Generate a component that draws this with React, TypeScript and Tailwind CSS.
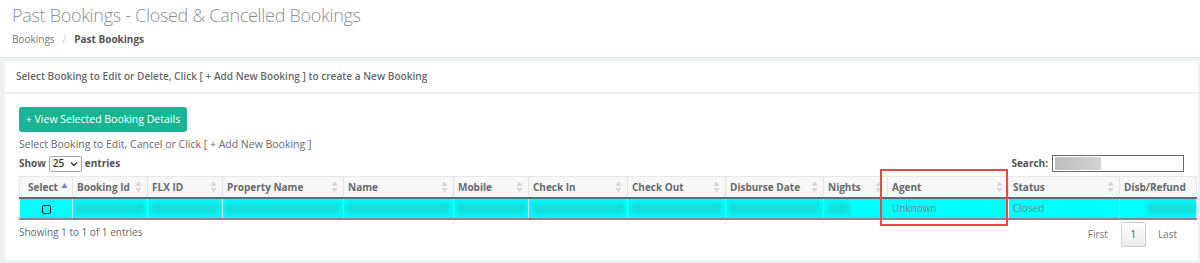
import React from "react";

const COLS = [
  { label: "Select", w: 53 },
  { label: "Booking Id", w: 75 },
  { label: "FLX ID", w: 75 },
  { label: "Property Name", w: 121 },
  { label: "Name", w: 110 },
  { label: "Mobile", w: 75 },
  { label: "Check In", w: 99 },
  { label: "Check Out", w: 98 },
  { label: "Disburse Date", w: 98 },
  { label: "Nights", w: 64 },
  { label: "Agent", w: 121 },
  { label: "Status", w: 111 },
  { label: "Disb/Refund", w: 77 },
];

function SortIcon({ active }: { active?: boolean }) {
  if (active) {
    return (
      <svg width="7" height="10" viewBox="0 0 7 10" className="absolute right-[4px] top-[5px]">
        <path d="M3.5 1 L6.5 6 L0.5 6 Z" fill="#7b7fe0" />
      </svg>
    );
  }
  return (
    <svg width="7" height="12" viewBox="0 0 7 12" className="absolute right-[5px] top-[4px]">
      <path d="M3.5 0.5 L6.5 5 L0.5 5 Z" fill="#d6d6d6" />
      <path d="M3.5 11.5 L6.5 7 L0.5 7 Z" fill="#d6d6d6" />
    </svg>
  );
}

function Blur({ className }: { className: string }) {
  return <div className={"h-[13px] bg-[#14e0e0] blur-[2px] " + className} />;
}

export default function App() {
  return (
    <div className="relative h-[263px] w-[1200px] overflow-hidden bg-[#eef0f2] font-['Open_Sans',sans-serif] text-[#676a6c]">
      {/* page heading */}
      <div className="h-[58px] border-b border-[#e3e6e9] bg-white px-[12px] pt-[3px]">
        <h1 className="text-[18px] font-light leading-[24px] tracking-[-0.3px] text-[#8d8f91]">
          Past Bookings - Closed &amp; Cancelled Bookings
        </h1>
        <div className="mt-[5px] flex items-center text-[10px] leading-[14px]">
          <span className="text-[#777]">Bookings</span>
          <span className="mx-[8px] text-[#ccc]">/</span>
          <span className="font-bold text-[#555]">Past Bookings</span>
        </div>
      </div>

      {/* panel */}
      <div className="ml-[5px] mr-[2px] mt-[3px] h-[199px] bg-white">
        <div className="flex h-[33px] items-center border-b-2 border-[#eef0f2] px-[11px] text-[10.1px] font-semibold text-[#676a6c]">
          Select Booking to Edit or Delete, Click [ + Add New Booking ] to create a New Booking
        </div>

        <div className="pl-[14px] pr-[1px] pt-[11px]">
          <button className="h-[25px] w-[168px] rounded-[3px] bg-[#1ab394] text-[10.5px] text-white">
            + View Selected Booking Details
          </button>
          <div className="mt-[5px] text-[10.5px] leading-[14px] text-[#676a6c]">
            Select Booking to Edit, Cancel or Click [ + Add New Booking ]
          </div>

          <div className="mt-[3px] flex h-[19px] items-center justify-between">
            <div className="flex items-center text-[10px] font-bold text-[#555]">
              <span>Show</span>
              <div className="mx-[3px] flex h-[16px] w-[33px] items-center justify-between rounded-[2px] border border-[#a9a9a9] px-[3px] font-semibold text-[#333]">
                <span>25</span>
                <svg width="8" height="6" viewBox="0 0 8 6">
                  <path d="M1 1.5 L4 4.5 L7 1.5" stroke="#333" strokeWidth="1.4" fill="none" />
                </svg>
              </div>
              <span>entries</span>
            </div>
            <div className="mr-[13px] flex items-center text-[10px] font-bold text-[#555]">
              <span className="mr-[4px]">Search:</span>
              <div className="flex h-[17px] w-[132px] items-center border border-[#6b6b6b] px-[2px]">
                <div className="h-[13px] w-[46px] bg-[linear-gradient(90deg,#bdbdbd,#d4d4d4)]" />
              </div>
            </div>
          </div>

          <table className="mt-[3px] w-[1177px] table-fixed border-collapse text-[10px]">
            <colgroup>
              {COLS.map((c) => (
                <col key={c.label} style={{ width: c.w }} />
              ))}
            </colgroup>
            <thead>
              <tr className="h-[21px] bg-[#f7f7f7]">
                {COLS.map((c, i) => (
                  <th
                    key={c.label}
                    className={
                      "relative border-x border-t border-b-2 border-x-[#e4e4e4] border-t-[#e8e8e8] border-b-[#6a6a6a] text-left font-bold text-[#676a6c] " +
                      (i === 0 ? "pl-[8px]" : "px-[4px]")
                    }
                  >
                    {c.label}
                    {i === 0 ? <SortIcon active /> : i === COLS.length - 1 ? null : <SortIcon />}
                  </th>
                ))}
              </tr>
            </thead>
            <tbody>
              <tr className="h-[21px] bg-[#00ffff]">
                <td className="border-x border-b-2 border-x-[#e0f4f4] border-b-[#888] text-center">
                  <span className="inline-block h-[9px] w-[9px] rounded-[2px] border border-[#222] align-middle" />
                </td>
                {COLS.slice(1).map((c, i) => {
                  const label = c.label;
                  let inner: React.ReactNode = <Blur className="mx-[2px]" />;
                  if (label === "Nights") inner = <Blur className="ml-[4px] w-[22px]" />;
                  if (label === "Agent") inner = <span className="px-[4px] text-[#788a8a]">Unknown</span>;
                  if (label === "Status") inner = <span className="px-[4px] text-[#788a8a]">Closed</span>;
                  if (label === "Disb/Refund") inner = <Blur className="ml-[27px]" />;
                  return (
                    <td key={i} className="border-x border-b-2 border-x-[#e6f6f6] border-b-[#888] p-0">
                      {inner}
                    </td>
                  );
                })}
              </tr>
            </tbody>
          </table>

          <div className="mt-[2px] flex items-start justify-between">
            <div className="pt-[3px] text-[10px] text-[#676a6c]">Showing 1 to 1 of 1 entries</div>
            <div className="mr-[20px] flex items-center text-[10px] text-[#777]">
              <span className="mr-[13px]">First</span>
              <span className="flex h-[25px] w-[25px] items-center justify-center rounded-[2px] border border-[#cfcfcf] bg-[linear-gradient(#fff,#e9e9e9)] text-[#555]">
                1
              </span>
              <span className="ml-[12px]">Last</span>
            </div>
          </div>
        </div>
      </div>

      {/* highlight box */}
      <div className="absolute left-[880px] top-[169px] h-[57px] w-[128px] border-2 border-[#e84a4a]" />
    </div>
  );
}
